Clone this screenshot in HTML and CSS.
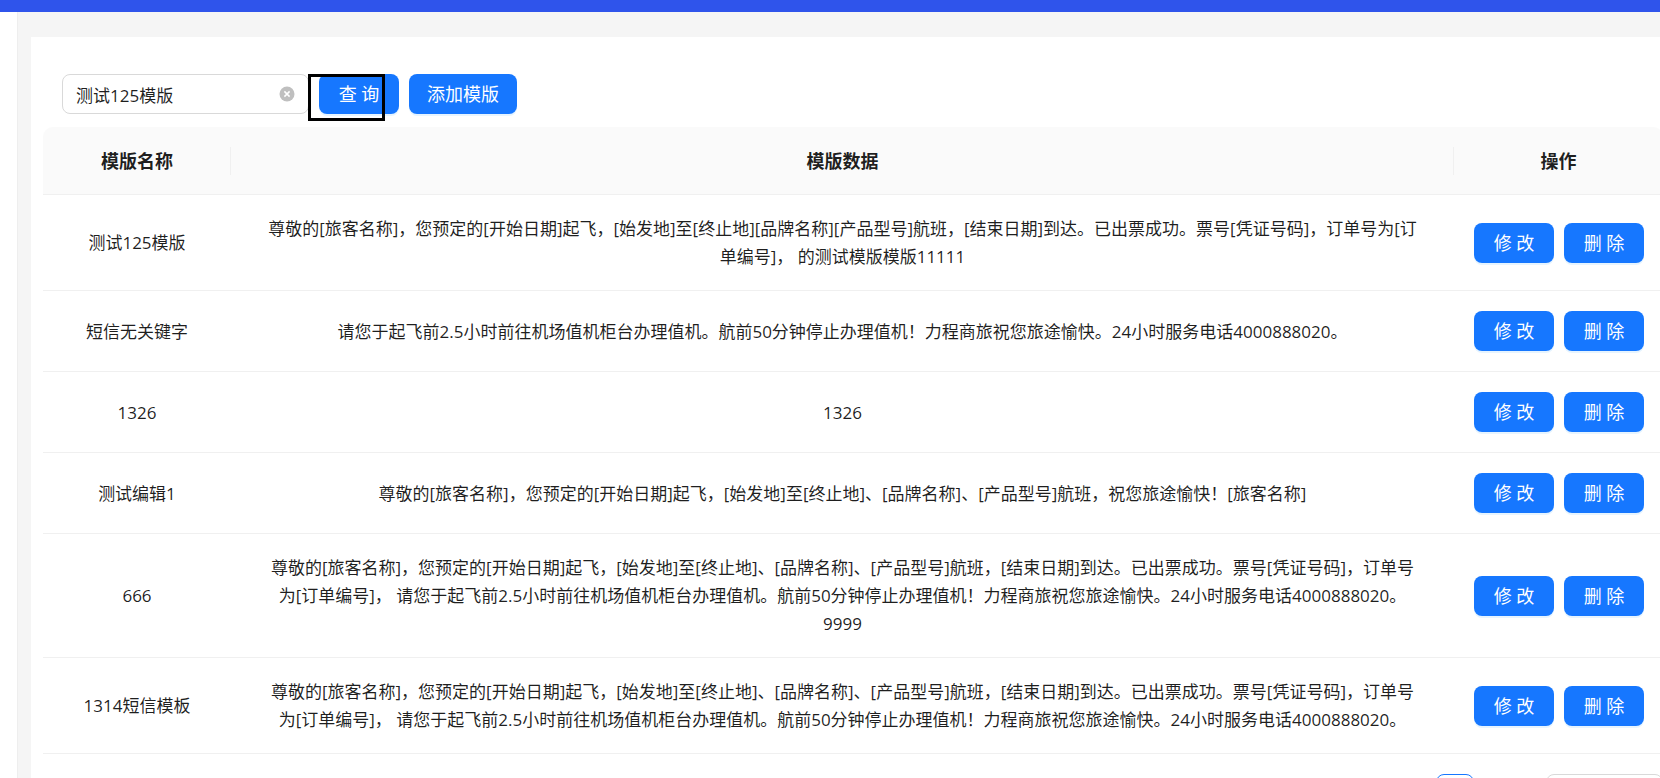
FILE: index.html
```html
<!DOCTYPE html>
<html lang="zh-CN">
<head>
    <meta charset="UTF-8">
    <meta name="viewport" content="width=device-width, initial-scale=1.0">
    <title>模版管理</title>
    <link rel="stylesheet" href="styles.css">
</head>
<body>

<header class="topbar"></header>

<div class="layout">
    <aside class="sidebar"></aside>
    <main class="content">
        <div class="card">

            <!-- 查询条件 -->
            <form class="toolbar" onsubmit="return false">
                <div class="search">
                    <input type="text" class="search-input" aria-label="模版名称" value="测试125模版">
                    <button type="button" class="clear-btn" aria-label="清空">
                        <svg viewBox="0 0 16 16" width="16" height="16">
                            <circle cx="8" cy="8" r="7.5" fill="#bfbfbf"/>
                            <path d="M5.4 5.4l5.2 5.2M10.6 5.4l-5.2 5.2" stroke="#fff" stroke-width="1.5"/>
                        </svg>
                    </button>
                </div>
                <div class="query">
                    <button type="submit" class="btn">查 询</button>
                    <span class="mark"></span>
                </div>
                <button type="button" class="btn">添加模版</button>
            </form>

            <!-- 模版列表 -->
            <table class="table">
                <thead>
                    <tr>
                        <th class="col-name">模版名称</th>
                        <th>模版数据</th>
                        <th class="col-action">操作</th>
                    </tr>
                </thead>
                <tbody>
                    <tr>
                        <td>测试125模版</td>
                        <td>尊敬的[旅客名称]，您预定的[开始日期]起飞，[始发地]至[终止地][品牌名称][产品型号]航班，[结束日期]到达。已出票成功。票号[凭证号码]，订单号为[订<br>单编号]， 的测试模版模版11111</td>
                        <td class="action"><div class="btns"><button type="button" class="btn">修 改</button><button type="button" class="btn">删 除</button></div></td>
                    </tr>
                    <tr>
                        <td>短信无关键字</td>
                        <td>请您于起飞前2.5小时前往机场值机柜台办理值机。航前50分钟停止办理值机！力程商旅祝您旅途愉快。24小时服务电话4000888020。</td>
                        <td class="action"><div class="btns"><button type="button" class="btn">修 改</button><button type="button" class="btn">删 除</button></div></td>
                    </tr>
                    <tr>
                        <td>1326</td>
                        <td>1326</td>
                        <td class="action"><div class="btns"><button type="button" class="btn">修 改</button><button type="button" class="btn">删 除</button></div></td>
                    </tr>
                    <tr>
                        <td>测试编辑1</td>
                        <td>尊敬的[旅客名称]，您预定的[开始日期]起飞，[始发地]至[终止地]、[品牌名称]、[产品型号]航班，祝您旅途愉快！[旅客名称]</td>
                        <td class="action"><div class="btns"><button type="button" class="btn">修 改</button><button type="button" class="btn">删 除</button></div></td>
                    </tr>
                    <tr>
                        <td>666</td>
                        <td>尊敬的[旅客名称]，您预定的[开始日期]起飞，[始发地]至[终止地]、[品牌名称]、[产品型号]航班，[结束日期]到达。已出票成功。票号[凭证号码]，订单号<br>为[订单编号]， 请您于起飞前2.5小时前往机场值机柜台办理值机。航前50分钟停止办理值机！力程商旅祝您旅途愉快。24小时服务电话4000888020。<br>9999</td>
                        <td class="action"><div class="btns"><button type="button" class="btn">修 改</button><button type="button" class="btn">删 除</button></div></td>
                    </tr>
                    <tr>
                        <td>1314短信模板</td>
                        <td>尊敬的[旅客名称]，您预定的[开始日期]起飞，[始发地]至[终止地]、[品牌名称]、[产品型号]航班，[结束日期]到达。已出票成功。票号[凭证号码]，订单号<br>为[订单编号]， 请您于起飞前2.5小时前往机场值机柜台办理值机。航前50分钟停止办理值机！力程商旅祝您旅途愉快。24小时服务电话4000888020。</td>
                        <td class="action"><div class="btns"><button type="button" class="btn">修 改</button><button type="button" class="btn">删 除</button></div></td>
                    </tr>
                </tbody>
            </table>

            <!-- 分页 -->
            <nav class="pagination" aria-label="分页">
                <a href="#" class="page-item" aria-label="第1页"></a>
                <select class="page-size" aria-label="每页条数"></select>
            </nav>
        </div>
    </main>
</div>

</body>
</html>
```
FILE: styles.css
```css
* {
    box-sizing: border-box;
}

body {
    margin: 0;
    height: 100vh;
    overflow: hidden;
    display: flex;
    flex-direction: column;
    background: #fff;
    color: rgba(0, 0, 0, 0.88);
    font-family: "Open Sans", "Noto Sans CJK SC", sans-serif;
    font-size: 17px;
    line-height: 28px;
}

/* 顶部 */
.topbar {
    flex: none;
    height: 12px;
    background: #2f54eb;
}

.layout {
    flex: 1;
    display: flex;
    min-height: 0;
    overflow: hidden;
}

.sidebar {
    flex: none;
    width: 18px;
    border-right: 1px solid #eee;
}

.content {
    flex: 1;
    min-width: 0;
    padding: 25px 0 0 13px;
    background: #f5f5f5;
}

/* 卡片右侧超出窗口 */
.card {
    margin-right: -15px;
    padding: 37px 12px 24px;
    background: #fff;
}

/* 查询条件 */
.toolbar {
    display: flex;
    gap: 10px;
    margin: 0 0 13px 19px;
}

.search {
    position: relative;
    width: 247px;
}

.search-input {
    width: 100%;
    height: 40px;
    padding: 0 38px 0 13px;
    border: 1px solid #d9d9d9;
    border-radius: 8px;
    outline: none;
    color: inherit;
    font: inherit;
}

.clear-btn {
    position: absolute;
    top: 12px;
    right: 14px;
    display: flex;
    padding: 0;
    border: none;
    background: none;
    cursor: pointer;
}

.query {
    position: relative;
}

/* 查询按钮标记框 */
.mark {
    position: absolute;
    top: 0;
    left: -11px;
    width: 77px;
    height: 47px;
    border: 3px solid #000;
    pointer-events: none;
}

.btn {
    min-width: 80px;
    height: 40px;
    padding: 0 18px;
    border: none;
    border-radius: 8px;
    background: #1677ff;
    box-shadow: 0 2px 0 rgba(5, 145, 255, 0.1);
    color: #fff;
    font-family: inherit;
    font-size: 18px;
    line-height: 28px;
    white-space: nowrap;
    cursor: pointer;
}

.btn:hover {
    background: #4096ff;
}

/* 表格 */
.table {
    width: 100%;
    table-layout: fixed;
    border-collapse: separate;
    border-spacing: 0;
    text-align: center;
}

.table th,
.table td {
    padding: 20px 4px 19px;
    border-bottom: 1px solid #f0f0f0;
}

.table th {
    background: linear-gradient(#f0f0f0, #f0f0f0) right center / 1px 28px no-repeat #fafafa;
    font-size: 18px;
    font-weight: 600;
}

.table th:first-child {
    border-top-left-radius: 10px;
}

.table th:last-child {
    border-top-right-radius: 10px;
    background: #fafafa;
}

.table .col-name {
    width: 188px;
}

.table .col-action {
    width: 209px;
}

.table .action {
    padding: 20px;
}

.btns {
    display: flex;
    gap: 10px;
}

/* 分页 */
.pagination {
    display: flex;
    justify-content: flex-end;
    gap: 72px;
    margin-top: 20px;
}

.page-item {
    width: 38px;
    height: 38px;
    border: 1px solid #1677ff;
    border-radius: 8px;
}

.page-size {
    width: 117px;
    height: 38px;
    border: 1px solid #d9d9d9;
    border-radius: 8px;
    background: #fff;
    appearance: none;
}
```
